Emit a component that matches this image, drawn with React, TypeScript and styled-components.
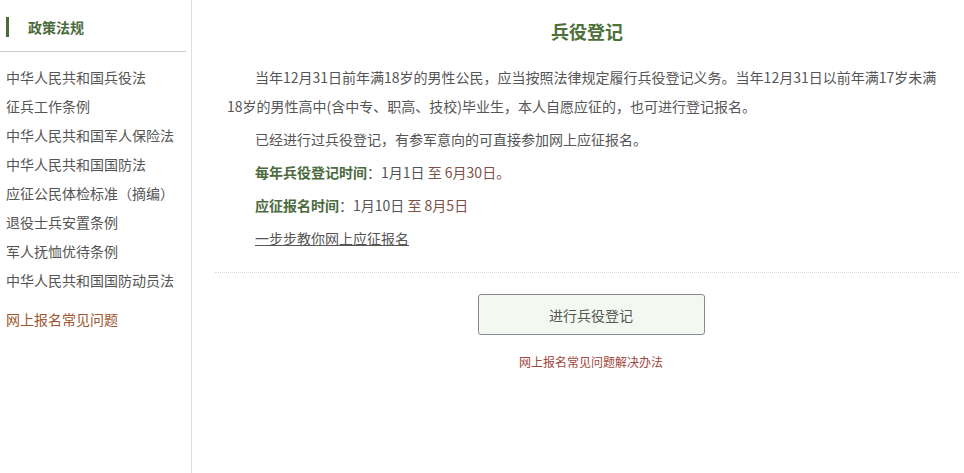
import styled, { createGlobalStyle } from 'styled-components'

const GlobalStyle = createGlobalStyle`
   html, body {
      margin: 0;
      padding: 0;
      background: #ffffff;
   }
   body {
      font-family: 'Noto Sans CJK SC', 'Noto Sans', sans-serif;
      color: #555555;
   }
   * {
      box-sizing: border-box;
   }
`

const sideLinks = [
   '中华人民共和国兵役法',
   '征兵工作条例',
   '中华人民共和国军人保险法',
   '中华人民共和国国防法',
   '应征公民体检标准（摘编）',
   '退役士兵安置条例',
   '军人抚恤优待条例',
   '中华人民共和国国防动员法',
]

const App: React.FC = () => {
   return (
      <>
         <GlobalStyle />
         <Page>
            <Sidebar>
               <SideHead>
                  <HeadLabel>政策法规</HeadLabel>
               </SideHead>
               <SideList>
                  {sideLinks.map((item) => (
                     <SideItem key={item}>{item}</SideItem>
                  ))}
                  <SideItem $accent>网上报名常见问题</SideItem>
               </SideList>
            </Sidebar>
            <Main>
               <Title>兵役登记</Title>
               <Content>
                  <Para $indent>
                     当年12月31日前年满18岁的男性公民，应当按照法律规定履行兵役登记义务。当年12月31日以前年满17岁未满18岁的男性高中(含中专、职高、技校)毕业生，本人自愿应征的，也可进行登记报名。
                  </Para>
                  <Para $indent>
                     已经进行过兵役登记，有参军意向的可直接参加网上应征报名。
                  </Para>
                  <Para $indent>
                     <Label>每年兵役登记时间</Label>：1月1日 <Dates>至 6月30日。</Dates>
                  </Para>
                  <Para $indent>
                     <Label>应征报名时间</Label>：1月10日 <Dates>至 8月5日</Dates>
                  </Para>
                  <Para $indent>
                     <Guide>一步步教你网上应征报名</Guide>
                  </Para>
               </Content>
               <Divider />
               <Actions>
                  <RegisterButton>进行兵役登记</RegisterButton>
                  <HelpLink>网上报名常见问题解决办法</HelpLink>
               </Actions>
            </Main>
         </Page>
      </>
   )
}

export default App

const Page = styled.div`
   display: flex;
   min-height: 100vh;
   width: 964px;
`

const Sidebar = styled.div`
   width: 192px;
   flex-shrink: 0;
   border-right: 1px solid #dddddd;
   padding-right: 5px;
`

const SideHead = styled.div`
   padding: 17px 0 14px;
   border-bottom: 1px solid #cccccc;
`

const HeadLabel = styled.div`
   margin-left: 6px;
   border-left: 3px solid #4b6b3e;
   padding-left: 19px;
   line-height: 20px;
   font-size: 14px;
   font-weight: 700;
   color: #4b6b3e;
`

const SideList = styled.div`
   display: flex;
   flex-direction: column;
   padding-top: 11px;
`

const SideItem = styled.div<{ $accent?: boolean }>`
   padding-left: 6px;
   font-size: 14px;
   line-height: 29px;
   white-space: nowrap;
   color: ${(p) => (p.$accent ? '#a0562f' : '#555555')};
   margin-top: ${(p) => (p.$accent ? '10px' : '0')};
`

const Main = styled.div`
   flex: 1;
   display: flex;
   flex-direction: column;
   padding: 0 5px 0 23px;
`

const Title = styled.h2`
   margin: 16px 0 0;
   text-align: center;
   font-size: 18px;
   line-height: 30px;
   font-weight: 700;
   color: #4b7038;
`

const Content = styled.div`
   padding: 17px 12px 0;
   display: flex;
   flex-direction: column;
   gap: 4px;
`

const Para = styled.p<{ $indent?: boolean }>`
   margin: 0;
   font-size: 14px;
   line-height: 29px;
   color: #555555;
   text-indent: ${(p) => (p.$indent ? '28px' : '0')};
`

const Label = styled.b`
   font-weight: 700;
   color: #4b6b3e;
`

const Dates = styled.span`
   color: #7d5048;
`

const Guide = styled.span`
   text-decoration: underline;
   color: #555555;
`

const Divider = styled.div`
   margin-top: 19px;
   border-top: 1px dotted #d6d6d6;
`

const Actions = styled.div`
   display: flex;
   flex-direction: column;
   align-items: center;
   padding: 21px 0 0 8px;
`

const RegisterButton = styled.button`
   width: 227px;
   height: 41px;
   border: 1px solid #8a8a8a;
   border-radius: 3px;
   background: #f3f9f0;
   font-family: 'Noto Sans CJK SC', 'Noto Sans', sans-serif;
   font-size: 14px;
   color: #555555;
   cursor: pointer;
`

const HelpLink = styled.a`
   margin-top: 17px;
   font-size: 12px;
   line-height: 20px;
   color: #a0463c;
`
